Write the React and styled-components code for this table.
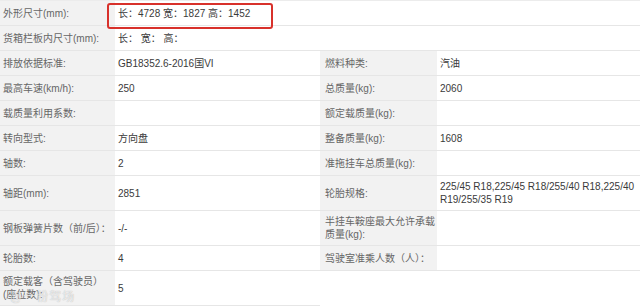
import React from 'react';
import styled, { createGlobalStyle } from 'styled-components';

const GlobalStyle = createGlobalStyle`
  html, body {
    margin: 0;
    padding: 0;
    background: #fff;
  }
  body {
    font-family: "Liberation Sans", "Noto Sans CJK SC", sans-serif;
  }
`;

const rows = [
  { label: '外形尺寸(mm):', value: '长：4728 宽：1827 高：1452', wide: true },
  { label: '货箱栏板内尺寸(mm):', value: '长：  宽：  高：', wide: true },
  { label: '排放依据标准:', value: 'GB18352.6-2016国VI', label2: '燃料种类:', value2: '汽油' },
  { label: '最高车速(km/h):', value: '250', label2: '总质量(kg):', value2: '2060' },
  { label: '载质量利用系数:', value: '', label2: '额定载质量(kg):', value2: '' },
  { label: '转向型式:', value: '方向盘', label2: '整备质量(kg):', value2: '1608' },
  { label: '轴数:', value: '2', label2: '准拖挂车总质量(kg):', value2: '' },
  { label: '轴距(mm):', value: '2851', label2: '轮胎规格:', value2: '225/45 R18,225/45 R18/255/40 R18,225/40 R19/255/35 R19' },
  { label: '钢板弹簧片数（前/后）：', value: '-/-', label2: '半挂车鞍座最大允许承载\n质量(kg):', value2: '' },
  { label: '轮胎数:', value: '4', label2: '驾驶室准乘人数（人）：', value2: '' },
  { label: '额定载客（含驾驶员）\n(座位数):', value: '5', last: true },
];

export default function App() {
  return (
    <>
      <GlobalStyle />
      <Wrap>
        <SpecTable>
          <colgroup>
            <col style={{ width: 115 }} />
            <col style={{ width: 205 }} />
            <col style={{ width: 117 }} />
            <col style={{ width: 203 }} />
          </colgroup>
          <tbody>
            {rows.map((r, i) => (
              <tr key={i}>
                <Label>{r.label}</Label>
                {r.wide ? (
                  <Value colSpan={3}>{r.value}</Value>
                ) : (
                  <>
                    <Value>{r.value}</Value>
                    {r.last ? (
                      <Blank colSpan={2} />
                    ) : (
                      <>
                        <Label $right>{r.label2}</Label>
                        <Value $right>{r.value2}</Value>
                      </>
                    )}
                  </>
                )}
              </tr>
            ))}
          </tbody>
        </SpecTable>
        <Highlight />
        <Watermark>@一粉驾场</Watermark>
      </Wrap>
    </>
  );
}

const Wrap = styled.div`
  position: relative;
  width: 640px;
  height: 306px;
  overflow: hidden;
`;

const SpecTable = styled.table`
  width: 640px;
  border-collapse: collapse;
  table-layout: fixed;
  font-size: 10px;
  line-height: 13px;
  td {
    height: 25px;
    padding: 4px 3px;
    vertical-align: middle;
    border-bottom: 1px solid #e6e6e6;
    box-sizing: border-box;
  }
  tr:first-child td {
    border-top: 1px solid #ececec;
  }
`;

const Label = styled.td`
  background: #f2f2f2;
  color: #666;
  white-space: pre;
  && {
    padding-left: ${p => (p.$right ? '5px' : '3px')};
    padding-right: 0;
  }
`;

const Value = styled.td`
  background: #fff;
  color: #3a3a3a;
  && {
    padding-left: 3px;
    padding-right: 4px;
  }
`;

const Blank = styled.td`
  background: #fff;
  && {
    border-bottom: none;
  }
`;

const Highlight = styled.div`
  position: absolute;
  left: 107px;
  top: 3px;
  width: 166px;
  height: 26px;
  box-sizing: border-box;
  border: 2px solid #d8312b;
  border-radius: 3px;
  pointer-events: none;
`;

const Watermark = styled.div`
  position: absolute;
  left: 10px;
  top: 287px;
  font-size: 12px;
  color: rgba(255, 255, 255, 0.7);
  text-shadow: 0 0 1px rgba(0, 0, 0, 0.3);
  letter-spacing: 1px;
`;
